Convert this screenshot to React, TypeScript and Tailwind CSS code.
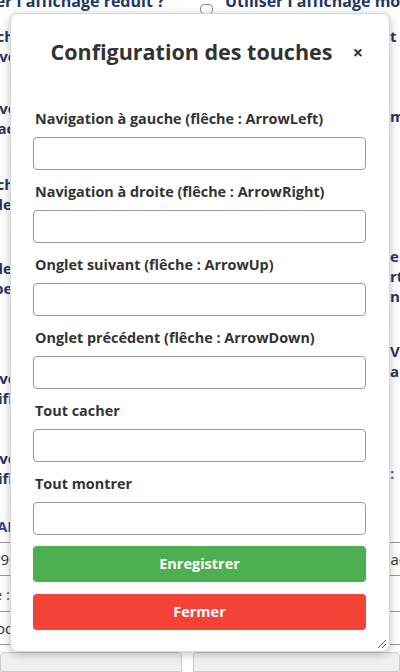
import React from 'react'

const fields = [
  'Navigation à gauche (flêche : ArrowLeft)',
  'Navigation à droite (flêche : ArrowRight)',
  'Onglet suivant (flêche : ArrowUp)',
  'Onglet précédent (flêche : ArrowDown)',
  'Tout cacher',
  'Tout montrer',
]

function Background() {
  return (
    <div className="h-[672px] w-[400px] overflow-hidden bg-white text-[15px] font-bold leading-[20px] text-[#233566]">
      {/* top option row */}
      <div className="-mt-[9px] flex h-[21px] items-start text-[16px]">
        <span className="-ml-[46px] w-[246px] shrink-0 whitespace-nowrap">Utiliser l'affichage réduit ?</span>
        <span className="mt-[13px] h-[10px] w-[13px] shrink-0 rounded-sm border border-[#888] bg-white" />
        <span className="ml-[12px] shrink-0 whitespace-nowrap">Utiliser l'affichage mobile ?</span>
      </div>

      {/* option columns (mostly hidden behind the dialog) */}
      <div className="mt-[14px] grid grid-cols-[200px_200px]">
        <div className="-ml-[30px] flex flex-col whitespace-nowrap">
          <div className="h-[72px]">Afficher le touch<br />Activer le point</div>
          <div className="h-[76px]">Activer la barr<br />Désactiver le dir</div>
          <div className="h-[84px]">Afficher le touch<br />Mode de tri auto</div>
          <div className="h-[110px]">Mode (ASC)<br />Tri personnalisé oc</div>
          <div className="h-[80px]">Activer le cache<br />Notification acti</div>
          <div className="h-[68px]">Activer le cache<br />Notification acti</div>
          <div className="text-[#2b4a9a]">Clé API P|</div>
        </div>
        <div className="ml-[190px] flex flex-col whitespace-nowrap">
          <div className="h-[80px]">t</div>
          <div className="h-[140px]">m</div>
          <div className="h-[95px]">e<br />rt<br />n</div>
          <div className="h-[122px]">V<br />a</div>
          <div className="text-[#3a6ad0]">:</div>
        </div>
      </div>

      {/* table-like rows */}
      <div className="mt-[6px] border-t border-[#999] font-normal text-[#333]">
        <div className="flex h-[33px] items-center justify-between border-b border-[#999]">
          <span className="-ml-[8px]">1999</span>
          <span className="-mr-[6px]">eac</span>
        </div>
        <div className="flex h-[36px] items-center border-b border-[#999] text-[#2b4a9a]">
          <span className="-ml-[10px]">le :</span>
        </div>
        <div className="flex h-[33px] items-center border-b border-[#999]">
          <span className="-ml-[4px]">ode</span>
        </div>
      </div>
      <div className="mt-[7px] flex gap-[11px]">
        <div className="h-[20px] w-[182px] rounded-t border border-[#ccc] bg-[#f0f0f0]" />
        <div className="h-[20px] flex-1 rounded-t border border-[#ccc] bg-[#f0f0f0]" />
      </div>
    </div>
  )
}

export default function App() {
  return (
    <div className="relative h-[672px] w-[400px] overflow-hidden font-['Open_Sans','Noto_Sans',sans-serif]">
      <Background />

      {/* Key configuration dialog */}
      <div className="absolute left-[10px] top-[13px] h-[639px] w-[380px] rounded-lg border border-[#d9d9d9] bg-white pl-[22px] pr-[23px] pt-[24px] shadow-[0_2px_10px_rgba(0,0,0,0.25)]">
        <div className="flex h-[28px] items-center">
          <h2 className="flex-1 text-center text-[21.5px] font-bold leading-[28px] text-[#333]">
            Configuration des touches
          </h2>
          <button className="w-[16px] text-[18px] font-bold leading-none text-[#333]">×</button>
        </div>

        <div className="mt-[43px] flex flex-col gap-[12px]">
          {fields.map((f) => (
            <div key={f} className="flex flex-col">
              <label className="mb-[8px] h-[20px] whitespace-nowrap pl-[2px] text-[14.4px] font-bold leading-[20px] text-[#333]">{f}</label>
              <input className="h-[33px] w-full rounded-[4px] border border-[#999] bg-white px-2 text-[13px]" />
            </div>
          ))}
        </div>

        <button className="mt-[11px] h-[36px] w-full rounded-[4px] bg-[#4caf50] text-[14.5px] font-bold text-white">
          Enregistrer
        </button>
        <button className="mt-[12px] h-[36px] w-full rounded-[4px] bg-[#f44336] text-[14.5px] font-bold text-white">
          Fermer
        </button>

        <svg className="absolute bottom-[2px] right-[2px]" width="12" height="12" viewBox="0 0 12 12">
          <path d="M11 3 L3 11 M11 7 L7 11" stroke="#666" strokeWidth="1" />
        </svg>
      </div>
    </div>
  )
}
